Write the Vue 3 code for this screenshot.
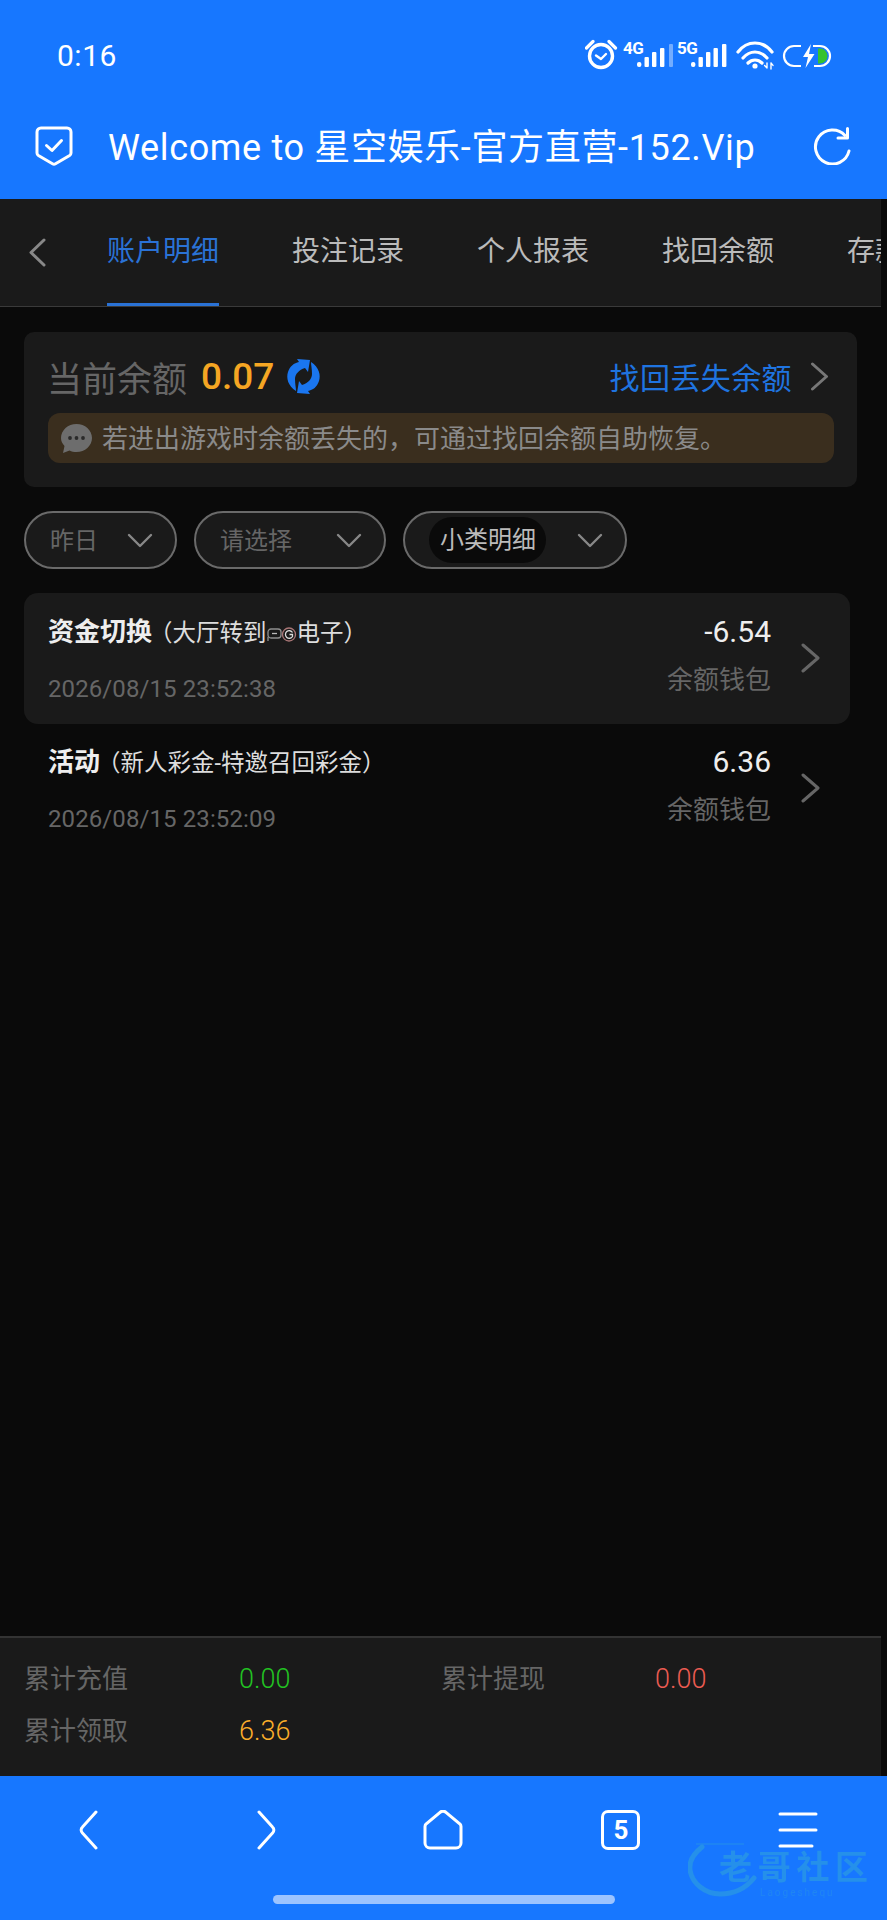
<template>
  <div class="page">

    <!-- Status bar + browser header -->
    <div class="top">
      <div class="status">
        <span class="clock">0:16</span>
        <svg class="status-icons" width="250" height="32" viewBox="0 0 250 32" fill="none">
          <circle cx="16" cy="17" r="11.5" stroke="#fff" stroke-width="3.4" />
          <path d="M1.5 9 8 2.5M30.5 9 24 2.5" stroke="#fff" stroke-width="3.2" stroke-linecap="round" />
          <path d="M11 16.5l5 3.500 5-5" stroke="#fff" stroke-width="2.4" stroke-linecap="round" stroke-linejoin="round" />

          <text x="38" y="15" class="net-label">4G</text>
          <rect x="52" y="23" width="4.4" height="5" rx="2" fill="#fff" />
          <rect x="59.5" y="18" width="4.4" height="10" rx="1" fill="#fff" />
          <rect x="67" y="13" width="4.4" height="15" rx="1" fill="#fff" />
          <rect x="75" y="9" width="4.4" height="19" rx="1" fill="#fff" />
          <rect x="84" y="5" width="4" height="23" rx="1" fill="#fff" opacity=".4" />

          <text x="92" y="15" class="net-label">5G</text>
          <rect x="106" y="23" width="4.4" height="5" rx="2" fill="#fff" />
          <rect x="113.5" y="18" width="4.4" height="10" rx="1" fill="#fff" />
          <rect x="121" y="13" width="4.4" height="15" rx="1" fill="#fff" />
          <rect x="128.5" y="9" width="4.4" height="19" rx="1" fill="#fff" />
          <rect x="137" y="5" width="4.4" height="23" rx="1" fill="#fff" />

          <path d="M153 13C162 1 178 1 187 13M158 19C165 11 175 11 182 19M163 24C167 20 173 20 177 24" stroke="#fff" stroke-width="3.2" stroke-linecap="round" />
          <circle cx="170" cy="27" r="2.6" fill="#fff" />
          <path d="M182 24v5M179.6 26.5l2.4 2.5M186 30v-6M186 24l2 2.4" stroke="#fff" stroke-width="1.4" stroke-linecap="round" />

          <path d="M216 7h-7a10 10 0 0 0 0 20h7M228 7h7a10 10 0 0 1 0 20h-6" stroke="#fff" stroke-width="2.2" />
          <path d="M233 9.500h2a7.500 7.500 0 0 1 0 15h-2z" fill="#35c22f" />
          <path d="M226 5l-8 13h5l-2.500 11 9-14h-5.500z" fill="#fff" />
        </svg>
      </div>

      <div class="browser-bar">
        <svg class="shield" width="38" height="40" viewBox="0 0 38 40" fill="none">
          <path d="M6 2h26a4 4 0 0 1 4 4v21a3 3 0 0 1-1.400 2.500L20.500 37.800a3 3 0 0 1-3 0L3.400 29.500A3 3 0 0 1 2 27V6a4 4 0 0 1 4-4z" stroke="#fff" stroke-width="3" />
          <path d="M11.500 19.500l5.500 5 9.500-10" stroke="#fff" stroke-width="3" stroke-linecap="round" stroke-linejoin="round" />
        </svg>
        <span class="page-title">Welcome to 星空娱乐-官方直营-152.Vip</span>
        <svg class="reload" width="40" height="38" viewBox="0 0 40 38" fill="none">
          <path d="M33 8.500A17 17 0 1 0 37 24" stroke="#fff" stroke-width="3" stroke-linecap="round" />
          <path d="M35.500 1.500v9.500h-9.500" stroke="#fff" stroke-width="3" stroke-linecap="round" stroke-linejoin="round" />
        </svg>
      </div>
    </div>

    <!-- Tabs -->
    <div class="tabs">
      <svg class="tabs-back" width="18" height="29" viewBox="0 0 18 29" fill="none">
        <path d="M16 2 3 14.500 16 27" stroke="#888" stroke-width="3" stroke-linecap="round" stroke-linejoin="round" />
      </svg>
      <div v-for="(tab, i) in tabs" :key="tab" :class="['tab', i === 0 ? 'tab--active' : '']">{{ tab }}</div>
    </div>

    <!-- Main -->
    <div class="main">
      <div class="balance-card">
        <div class="balance-row">
          <span class="balance-label">当前余额</span>
          <span class="balance-value">0.07</span>
          <svg class="balance-sync" width="35" height="35" viewBox="0 0 35 35" fill="#1a76f0">
            <path d="M10 32C2 27 0 19 2 13 4 7 8 4 13 3L11 0l13 1-2 12-3-4C13 11 9 15 9 20c0 5 1 9 1 12z" />
            <path d="M25 3c8 5 10 13 8 19-2 6-6 9-11 10l2 3-13-1 2-12 3 4c6-2 10-6 10-11 0-5-1-9-1-12z" />
          </svg>
          <span class="recover-link">找回丢失余额</span>
          <svg class="recover-go" width="19" height="29" viewBox="0 0 19 29" fill="none">
            <path d="M2.500 2 16.500 14.500 2.500 27" stroke="#777" stroke-width="3" stroke-linecap="round" stroke-linejoin="round" />
          </svg>
        </div>
        <div class="notice">
          <svg class="notice-icon" width="31" height="29" viewBox="0 0 31 29" fill="#6d6d6d">
            <path d="M15.500 0C24 0 31 6.200 31 14s-7 14-15.500 14c-2.500 0-5-.500-7-1.500L2 29l1.500-7C1.200 19.500 0 17 0 14 0 6.200 7 0 15.500 0z" />
            <circle cx="9" cy="14" r="1.900" fill="#2a2a2a" />
            <circle cx="15.500" cy="14" r="1.900" fill="#2a2a2a" />
            <circle cx="22" cy="14" r="1.900" fill="#2a2a2a" />
          </svg>
          <span class="notice-text">若进出游戏时余额丢失的，可通过找回余额自助恢复。</span>
        </div>
      </div>

      <div class="filters">
        <div class="filter filter--date">
          <span class="filter-text">昨日</span>
          <svg class="filter-arrow" width="26" height="15" viewBox="0 0 26 15" fill="none"><path d="M2 2l11 11L24 2" stroke="#888" stroke-width="2.400" stroke-linecap="round" stroke-linejoin="round" /></svg>
        </div>
        <div class="filter filter--type">
          <span class="filter-text">请选择</span>
          <svg class="filter-arrow" width="26" height="15" viewBox="0 0 26 15" fill="none"><path d="M2 2l11 11L24 2" stroke="#888" stroke-width="2.400" stroke-linecap="round" stroke-linejoin="round" /></svg>
        </div>
        <div class="filter filter--sub">
          <span class="filter-pill">小类明细</span>
          <svg class="filter-arrow" width="26" height="15" viewBox="0 0 26 15" fill="none"><path d="M2 2l11 11L24 2" stroke="#888" stroke-width="2.400" stroke-linecap="round" stroke-linejoin="round" /></svg>
        </div>
      </div>

      <div class="records">
        <div v-for="(rec, i) in records" :key="rec.time" :class="['record', i === 0 ? 'record--on' : '']">
          <div class="record-left">
            <p class="record-title">
              <b>{{ rec.title }}</b>
              <span class="record-sub">（{{ rec.sub }}<svg v-if="rec.pg" class="pg" width="30" height="15" viewBox="0 0 30 15" fill="none">
                <rect x="1" y="2" width="13" height="9" rx="3" stroke="#8f8f8f" stroke-width="1.300" />
                <path d="M1 10v4" stroke="#8f8f8f" stroke-width="1.300" />
                <path d="M5 6.500h5" stroke="#bbb" stroke-width="1.300" />
                <circle cx="22" cy="7.500" r="6.500" stroke="#a77" stroke-width="1.300" />
                <path d="M25.500 5.500A3.800 3.800 0 1 0 25.500 9.500V7.500h-3" stroke="#ddd" stroke-width="1.300" />
              </svg>{{ rec.tail }}）</span>
            </p>
            <p class="record-time">{{ rec.time }}</p>
          </div>
          <div class="record-right">
            <p class="record-amount">{{ rec.amount }}</p>
            <p class="record-wallet">余额钱包</p>
          </div>
          <svg class="record-go" width="19" height="30" viewBox="0 0 19 30" fill="none">
            <path d="M2 2l15 13L2 28" stroke="#666" stroke-width="3" stroke-linecap="round" stroke-linejoin="round" />
          </svg>
        </div>
      </div>
    </div>

    <!-- Totals -->
    <div class="totals">
      <template v-for="t in totals" :key="t.label">
        <span class="totals-label">{{ t.label }}</span>
        <span :class="['totals-value', t.cls]">{{ t.value }}</span>
      </template>
    </div>

    <!-- Browser nav -->
    <div class="nav">
      <div class="nav-icons">
        <svg width="20" height="40" viewBox="0 0 20 40" fill="none"><path d="M17 2 3.500 17a4 4 0 0 0 0 6L17 38" stroke="#fff" stroke-width="3" stroke-linecap="round" /></svg>
        <svg width="20" height="40" viewBox="0 0 20 40" fill="none"><path d="M3 2l13.500 15a4 4 0 0 1 0 6L3 38" stroke="#fff" stroke-width="3" stroke-linecap="round" /></svg>
        <svg width="40" height="40" viewBox="0 0 40 40" fill="none"><path d="M2 16.500a4 4 0 0 1 1-2.500L17 2.500a4 4 0 0 1 6 0L37 14a4 4 0 0 1 1 2.500V33a5 5 0 0 1-5 5H7a5 5 0 0 1-5-5z" stroke="#fff" stroke-width="3" /></svg>
        <div class="tab-count">5</div>
        <svg width="40" height="36" viewBox="0 0 40 36" fill="none"><path d="M2 2h36M2 18h36M2 34h32" stroke="#fff" stroke-width="3" stroke-linecap="round" /></svg>
      </div>
      <div class="home-bar"></div>

      <div class="watermark">
        <svg class="watermark-arc" width="84" height="56" viewBox="0 0 84 56" fill="none">
          <path d="M14 5C5 12 1 20 2 28c2 14 16 24 30 24 14 0 26-6 34-16" stroke="#2590ea" stroke-width="5" stroke-linecap="round" />
          <path d="M8 2h48" stroke="#2590ea" stroke-width="1.500" opacity=".7" />
        </svg>
        <span class="watermark-text">老哥社区</span>
        <span class="watermark-sub">Laogeshequ</span>
      </div>
    </div>

  </div>
</template>

<script setup>
const tabs = ['账户明细', '投注记录', '个人报表', '找回余额', '存款记录']

const records = [
  { title: '资金切换', sub: '大厅转到', pg: true, tail: '电子', time: '2026/08/15 23:52:38', amount: '-6.54' },
  { title: '活动', sub: '新人彩金-特邀召回彩金', pg: false, tail: '', time: '2026/08/15 23:52:09', amount: '6.36' },
]

const totals = [
  { label: '累计充值', value: '0.00', cls: 'is-green' },
  { label: '累计提现', value: '0.00', cls: 'is-red' },
  { label: '累计领取', value: '6.36', cls: 'is-orange' },
]
</script>

<style>
html, body { background: #0a0a0a; }
</style>

<style scoped>
.page {
  width: 887px;
  height: 1920px;
  display: flex;
  flex-direction: column;
  overflow: hidden;
  background: #0a0a0a;
  font-family: Roboto, "Noto Sans CJK SC", sans-serif;
}

p { margin: 0; }

/* Top */
.top { background: #1777ff; color: #fff; }

.status {
  height: 92px;
  padding: 18px 52px 0 57px;
  box-sizing: border-box;
  display: flex;
  align-items: center;
  justify-content: space-between;
}

.clock { font-size: 30px; letter-spacing: .5px; }
.net-label { font: 700 17px Roboto, sans-serif; fill: #fff; letter-spacing: -.5px; }

.browser-bar {
  height: 107px;
  display: flex;
  align-items: center;
  padding: 0 35px;
}

.page-title {
  margin: -4px 0 0 35px;
  font-size: 36px;
  letter-spacing: .65px;
  white-space: nowrap;
  flex: 1;
}

/* Tabs */
.tabs {
  width: 881px;
  height: 108px;
  box-sizing: border-box;
  background: #1a1a1a;
  border-bottom: 1px solid #3a3a3a;
  display: flex;
  align-items: flex-start;
  overflow: hidden;
  padding-left: 28px;
  gap: 73px;
  flex-shrink: 0;
}

.tabs-back {
  flex-shrink: 0;
  margin: 39px -12px 0 0;
}

.tab {
  width: 112px;
  height: 104px;
  flex-shrink: 0;
  font-size: 28px;
  line-height: 106px;
  color: #bbb;
  white-space: nowrap;
}

.tab--active {
  color: #2a72d5;
  border-bottom: 3px solid #2a72d5;
}

/* Main */
.main {
  flex: 1;
  padding: 25px 0 0 24px;
  min-height: 0;
}

.balance-card {
  width: 833px;
  height: 155px;
  box-sizing: border-box;
  background: #1a1a1a;
  border-radius: 10px;
  padding: 0 23px 24px 24px;
}

.balance-row {
  height: 81px;
  padding: 7px 5px 0 0;
  box-sizing: border-box;
  display: flex;
  align-items: center;
}

.balance-label { font-size: 35px; color: #666; margin-left: -1px; }
.balance-value { margin-left: 14px; font-size: 37px; font-weight: 500; color: #f5a623; }
.balance-sync { margin-left: 12px; flex-shrink: 0; }
.recover-link { margin-left: auto; margin-right: 18px; font-size: 30px; letter-spacing: .4px; color: #1f74e0; }
.recover-go { flex-shrink: 0; }

.notice {
  height: 50px;
  background: #3a2e1e;
  border-radius: 12px;
  display: flex;
  align-items: center;
  gap: 10px;
  padding-left: 13px;
  font-size: 26px;
  color: #8a8a8a;
  white-space: nowrap;
}

.notice-icon { flex-shrink: 0; }
.notice-text { margin-top: -4px; }

.filters {
  display: flex;
  gap: 17px;
  margin-top: 24px;
}

.filter {
  height: 58px;
  box-sizing: border-box;
  background: #1a1a1a;
  border: 2px solid #6a6a6a;
  border-radius: 29px;
  display: flex;
  align-items: center;
  font-size: 24px;
  color: #666;
}

.filter--date { width: 153px; padding-left: 24px; }
.filter--type { width: 192px; padding-left: 24px; }
.filter--sub { width: 224px; padding-left: 24px; }

.filter-text { margin-top: -4px; }
.filter-arrow { margin-left: auto; margin-right: 22px; flex-shrink: 0; }

.filter-pill {
  height: 46px;
  line-height: 46px;
  padding: 0 11px;
  width: 117px;
  box-sizing: border-box;
  border-radius: 23px;
  background: #0a0a0a;
  color: #bbb;
  white-space: nowrap;
  overflow: hidden;
}

/* Records */
.records { margin-top: 24px; width: 826px; }

.record {
  height: 130px;
  display: flex;
  align-items: flex-start;
  padding: 0 30px 0 24px;
  border-radius: 14px;
}

.record--on {
  background: #1a1a1a;
  height: 131px;
  margin-bottom: -1px;
}

.record-left { flex: 1; padding-top: 22px; }

.record-title {
  line-height: 34px;
  font-size: 26px;
  color: #eee;
  white-space: nowrap;
}

.record-title b { font-weight: 700; }

.record-sub { font-size: 23.5px; color: #ddd; margin-left: -3px; }
.pg { vertical-align: -1px; }

.record-time {
  margin-top: 22px;
  line-height: 34px;
  font-size: 24px;
  letter-spacing: .1px;
  color: #666;
}

.record-right { padding-top: 22px; text-align: right; }

.record-amount {
  line-height: 34px;
  font-size: 30px;
  color: #eee;
}

.record-wallet {
  margin-top: 14px;
  line-height: 34px;
  font-size: 26px;
  color: #666;
}

.record-go { margin: 50px 0 0 30px; flex-shrink: 0; }

/* Totals */
.totals {
  width: 881px;
  height: 140px;
  box-sizing: border-box;
  flex-shrink: 0;
  background: #1a1a1a;
  border-top: 2px solid #333;
  padding: 24px 0 0 24px;
  display: grid;
  grid-template-columns: 215px 202px 214px 1fr;
  grid-auto-rows: 34px;
  row-gap: 18px;
  line-height: 34px;
}

.totals-label { font-size: 26px; color: #666; }
.totals-value { font-size: 27px; font-weight: 300; }
.is-green { color: #22c322; }
.is-red { color: #ec5c52; }
.is-orange { color: #fbae2a; }

/* Browser nav */
.nav {
  height: 144px;
  flex-shrink: 0;
  background: #1777ff;
  position: relative;
  padding-top: 34px;
  box-sizing: border-box;
}

.nav-icons {
  display: grid;
  grid-template-columns: repeat(5, 1fr);
  justify-items: center;
  align-items: center;
  height: 40px;
}

.tab-count {
  width: 39px;
  height: 40px;
  box-sizing: border-box;
  border: 3px solid #fff;
  border-radius: 7px;
  color: #fff;
  font-size: 26px;
  font-weight: 700;
  line-height: 34px;
  text-align: center;
}

.home-bar {
  width: 342px;
  height: 9px;
  border-radius: 5px;
  background: #9cc4ff;
  margin: 45px auto 0;
}

/* Forum watermark over the nav */
.watermark {
  position: absolute;
  left: 688px;
  top: 66px;
  width: 190px;
  height: 60px;
  color: #2590ea;
  pointer-events: none;
}

.watermark-arc { position: absolute; left: 0; top: 0; }

.watermark-text {
  position: absolute;
  left: 31px;
  top: 8px;
  font-size: 33px;
  line-height: 36px;
  font-weight: 700;
  letter-spacing: 5.700px;
  white-space: nowrap;
  filter: blur(.6px);
}

.watermark-sub {
  position: absolute;
  left: 72px;
  top: 45px;
  font-size: 10px;
  line-height: 12px;
  letter-spacing: 2px;
  opacity: .6;
}
</style>
